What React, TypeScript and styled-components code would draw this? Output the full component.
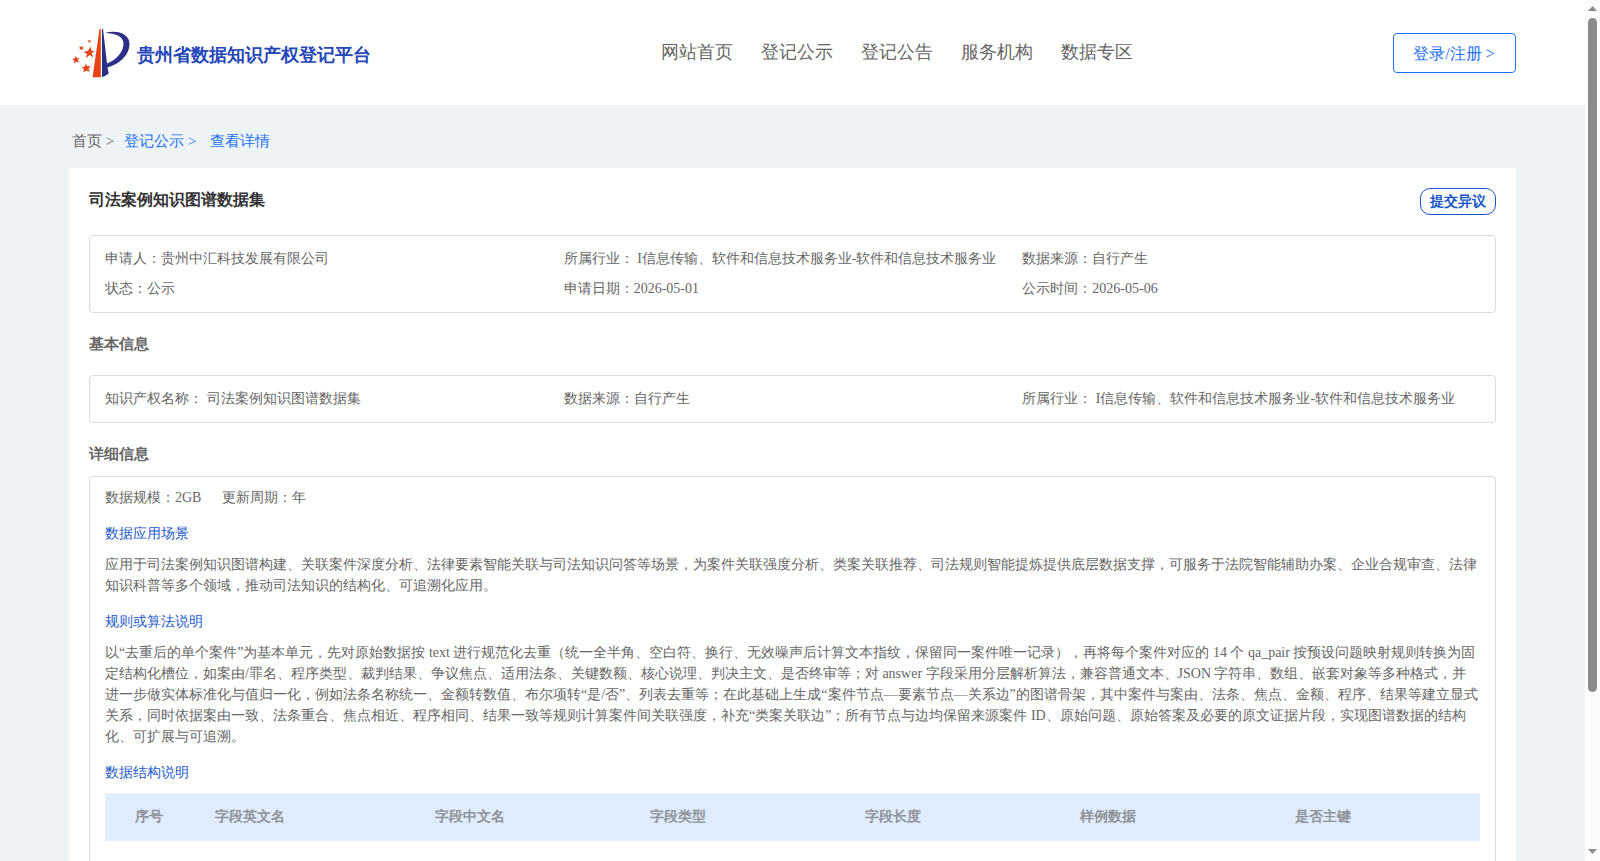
import React from 'react';
import styled, { createGlobalStyle } from 'styled-components';

const GlobalStyle = createGlobalStyle`
  * { box-sizing: border-box; }
  body { margin: 0; overflow: hidden; background: #fff; }
  h1, h2, h3, p { margin: 0; }
`;

const Viewport = styled.div`
  display: flex;
  height: 861px;
  overflow: hidden;
  font-family: 'Liberation Serif', serif;
  font-size: 14px;
  color: #666;
`;

const Page = styled.div`
  flex: 1;
  min-width: 0;
  height: 861px;
  overflow: hidden;
  background: #eef3f6;
`;

const Header = styled.header`
  display: flex;
  align-items: flex-start;
  justify-content: space-between;
  height: 105px;
  padding: 0 69px;
  background: #fff;
`;

const Brand = styled.div`
  display: flex;
  width: 592px;
  padding: 26px 0 0 3px;
`;

const BrandName = styled.div`
  margin-left: 5px;
  padding-top: 15px;
  font-size: 18px;
  line-height: 28px;
  font-weight: bold;
  color: #2447b8;
`;

const Nav = styled.nav`
  display: flex;
  flex: 1;
  gap: 28px;
  padding-top: 37px;
  font-size: 18px;
  line-height: 30px;
`;

const LoginButton = styled.button`
  width: 123px;
  height: 40px;
  margin-top: 33px;
  padding: 1px 1px 0 0;
  border: 1px solid #1a70f8;
  border-radius: 4px;
  background: #fff;
  font: 16px/37px 'Liberation Serif', serif;
  color: #1a70f8;
`;

const Breadcrumb = styled.div`
  display: flex;
  height: 63px;
  padding: 21px 0 0 72px;
  font-size: 15px;
  line-height: 30px;
`;

const Crumb = styled.span<{ $active?: boolean; $gap?: number }>`
  margin-left: ${(p) => p.$gap ?? 0}px;
  color: ${(p) => (p.$active ? '#1a70f8' : '#666')};
`;

const Card = styled.main`
  width: 1447px;
  height: 1000px;
  margin-left: 69px;
  padding: 20px;
  background: #fff;
`;

const TitleRow = styled.div`
  display: flex;
  justify-content: space-between;
  height: 47px;
`;

const Title = styled.h1`
  font-size: 16px;
  line-height: 24px;
  color: #333;
`;

const ObjectionButton = styled.button`
  width: 76px;
  height: 27px;
  padding: 0;
  border: 1px solid #1955c8;
  border-radius: 10px;
  background: #fff;
  font: bold 14px/25px 'Liberation Serif', serif;
  color: #1955c8;
`;

const InfoBox = styled.section`
  display: grid;
  grid-template-columns: repeat(3, 458.67px);
  padding: 8px 15px;
  border: 1px solid #dcdcdc;
  border-radius: 4px;
  line-height: 30px;
  white-space: nowrap;
`;

const SectionTitle = styled.h2<{ $height: number }>`
  height: ${(p) => p.$height}px;
  padding-top: 16px;
  font-size: 15px;
  line-height: 30px;
`;

const DetailBox = styled.section`
  height: 600px;
  padding: 6px 15px;
  border: 1px solid #dcdcdc;
  border-radius: 4px;
`;

const Meta = styled.div`
  display: flex;
  gap: 21px;
  line-height: 30px;
`;

const SubTitle = styled.h3`
  margin-top: 11px;
  font-size: 14px;
  font-weight: normal;
  line-height: 20px;
  color: #1c5ace;
`;

const Paragraph = styled.p`
  margin: 10px 0 16px;
  line-height: 21px;

  & + ${SubTitle} {
    margin-top: 0;
  }
`;

const TableHead = styled.div`
  display: grid;
  grid-template-columns: 80px 220px repeat(3, 215px) 215px 1fr;
  height: 48px;
  margin-top: 10px;
  padding-left: 30px;
  background: #e0edff;
  font-weight: bold;
  line-height: 48px;
  color: #909399;
`;

const Scrollbar = styled.div`
  display: flex;
  flex-direction: column;
  align-items: center;
  width: 15px;
  background: #fcfcfc;
`;

const Thumb = styled.div`
  width: 9px;
  height: 674px;
  margin: 7px 0 153px;
  border-radius: 5px;
  background: #8b8b8b;
`;

const Logo = () => (
  <svg width="60" height="54" viewBox="0 0 60 54">
    <path d="M27.5 3 L28.8 3 L28.8 51.2 L20.6 51.2 Z" fill="#e64414" />
    <path
      d="M30 3 H31 L35 37.5 C44 34 51.5 26.5 51.5 17.5 C51.5 10 43 7.2 33 7 C45.5 3.5 57.5 8 57.5 18 C57.5 30 46 38.5 35.4 41.5 L36.8 47.5 C34.5 49 32.5 50.5 30 51.2 Z"
      fill="#2b2f86"
    />
    <g fill="#e64414">
      <path d="M18.4 13.6 L18.3 15 L19 16.2 L17.5 16.1 L16.4 16.7 L16.4 15.4 L15.8 14.4 L17.2 14.5 Z" />
      <g transform="translate(0 9.6)">
        <path d="M7 11 L9 11.5 L11.3 10.3 L10.7 12.5 L11.4 14.2 L9.4 13.7 L7.5 14.5 L8 12.6 Z" />
        <path d="M18.9 11.2 L19.3 14.8 L22.6 15.7 L19.7 17.4 L21.4 21.8 L17.7 19.5 L14 22.3 L15 18.5 L11.5 16.3 L15.9 15.2 Z" />
        <path d="M3.9 20.5 L5 22.8 L7.6 22.4 L5.9 24.5 L7 27 L4.4 26.1 L2.1 27.8 L2.3 25.1 L.2 23.5 L2.7 22.9 Z" />
        <path d="M14 28 L15.3 30.7 L18.8 30.3 L16.6 33 L17.7 36.2 L14.6 34.8 L11.3 36.7 L11.9 33.2 L9.5 31.3 L12.8 30.9 Z" />
      </g>
    </g>
  </svg>
);

const Arrow = ({ down = false }: { down?: boolean }) => (
  <svg width="15" height="11" viewBox="0 0 15 11">
    <path d={down ? 'M3 4 H12 L7.5 9 Z' : 'M3 11 H12 L7.5 6 Z'} fill="#8b8b8b" />
  </svg>
);

const navItems = ['网站首页', '登记公示', '登记公告', '服务机构', '数据专区'];
const columns = ['序号', '字段英文名', '字段中文名', '字段类型', '字段长度', '样例数据', '是否主键'];
const industry = '所属行业： I信息传输、软件和信息技术服务业-软件和信息技术服务业';

export default function App() {
  return (
    <Viewport>
      <GlobalStyle />
      <Page>
        <Header>
          <Brand>
            <Logo />
            <BrandName>贵州省数据知识产权登记平台</BrandName>
          </Brand>
          <Nav>
            {navItems.map((item) => (
              <span key={item}>{item}</span>
            ))}
          </Nav>
          <LoginButton>登录/注册 &gt;</LoginButton>
        </Header>
        <Breadcrumb>
          <Crumb>首页 &gt;</Crumb>
          <Crumb $active $gap={10}>登记公示 &gt;</Crumb>
          <Crumb $active $gap={14}>查看详情</Crumb>
        </Breadcrumb>
        <Card>
          <TitleRow>
            <Title>司法案例知识图谱数据集</Title>
            <ObjectionButton>提交异议</ObjectionButton>
          </TitleRow>
          <InfoBox>
            <span>申请人：贵州中汇科技发展有限公司</span>
            <span>{industry}</span>
            <span>数据来源：自行产生</span>
            <span>状态：公示</span>
            <span>申请日期：2026-05-01</span>
            <span>公示时间：2026-05-06</span>
          </InfoBox>
          <SectionTitle $height={62}>基本信息</SectionTitle>
          <InfoBox>
            <span>知识产权名称： 司法案例知识图谱数据集</span>
            <span>数据来源：自行产生</span>
            <span>{industry}</span>
          </InfoBox>
          <SectionTitle $height={53}>详细信息</SectionTitle>
          <DetailBox>
            <Meta>
              <span>数据规模：2GB</span>
              <span>更新周期：年</span>
            </Meta>
            <SubTitle>数据应用场景</SubTitle>
            <Paragraph>
              应用于司法案例知识图谱构建、关联案件深度分析、法律要素智能关联与司法知识问答等场景，为案件关联强度分析、类案关联推荐、司法规则智能提炼提供底层数据支撑，可服务于法院智能辅助办案、企业合规审查、法律知识科普等多个领域，推动司法知识的结构化、可追溯化应用。
            </Paragraph>
            <SubTitle>规则或算法说明</SubTitle>
            <Paragraph>
              以“去重后的单个案件”为基本单元，先对原始数据按 text 进行规范化去重（统一全半角、空白符、换行、无效噪声后计算文本指纹，保留同一案件唯一记录），再将每个案件对应的 14 个 qa_pair 按预设问题映射规则转换为固定结构化槽位，如案由/罪名、程序类型、裁判结果、争议焦点、适用法条、关键数额、核心说理、判决主文、是否终审等；对 answer 字段采用分层解析算法，兼容普通文本、JSON 字符串、数组、嵌套对象等多种格式，并进一步做实体标准化与值归一化，例如法条名称统一、金额转数值、布尔项转“是/否”、列表去重等；在此基础上生成“案件节点—要素节点—关系边”的图谱骨架，其中案件与案由、法条、焦点、金额、程序、结果等建立显式关系，同时依据案由一致、法条重合、焦点相近、程序相同、结果一致等规则计算案件间关联强度，补充“类案关联边”；所有节点与边均保留来源案件 ID、原始问题、原始答案及必要的原文证据片段，实现图谱数据的结构化、可扩展与可追溯。
            </Paragraph>
            <SubTitle>数据结构说明</SubTitle>
            <TableHead>
              {columns.map((c) => (
                <span key={c}>{c}</span>
              ))}
            </TableHead>
          </DetailBox>
        </Card>
      </Page>
      <Scrollbar>
        <Arrow />
        <Thumb />
        <Arrow down />
      </Scrollbar>
    </Viewport>
  );
}
